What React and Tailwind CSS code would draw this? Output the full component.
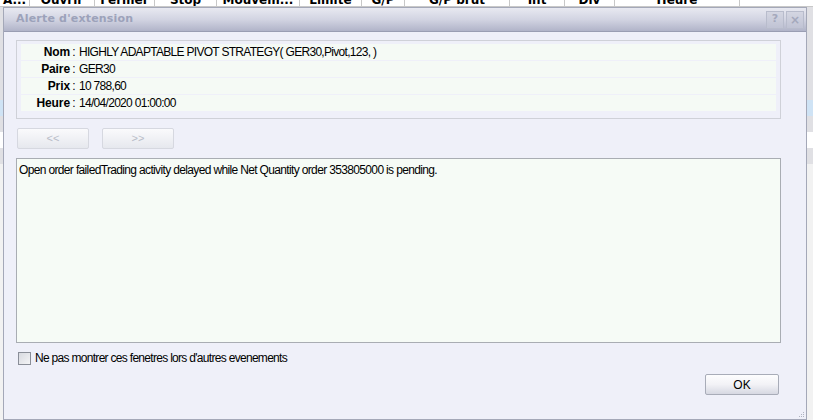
import React, { useState } from 'react';

const columns = [
  { label: 'A...', w: 'w-[30px]' },
  { label: 'Ouvrir', w: 'w-[65px]' },
  { label: 'Fermer', w: 'w-[60px]' },
  { label: 'Stop', w: 'w-[62px]' },
  { label: 'Mouvem...', w: 'w-[83px]' },
  { label: 'Limite', w: 'w-[62px]' },
  { label: 'G/P', w: 'w-[43px]' },
  { label: 'G/P brut', w: 'w-[105px]' },
  { label: 'Int', w: 'w-[55px]' },
  { label: 'Div', w: 'w-[50px]' },
  { label: 'Heure', w: 'w-[125px]' },
];

const details = [
  { label: 'Nom', value: 'HIGHLY ADAPTABLE PIVOT STRATEGY( GER30,Pivot,123, )' },
  { label: 'Paire', value: 'GER30' },
  { label: 'Prix', value: '10 788,60' },
  { label: 'Heure', value: '14/04/2020 01:00:00' },
];

const NavButton = ({ children }) => (
  <button
    disabled
    className="w-[72px] h-[21px] rounded-[2px] border border-[#d6d8e0] bg-gradient-to-b from-[#fafafc] to-[#e6e8ee] text-[11px] text-[#b8bcc8]"
  >
    {children}
  </button>
);

export default function App() {
  const [hideNext, setHideNext] = useState(false);

  return (
    <div className="relative w-[813px] h-[420px] overflow-hidden bg-[#f2f2f2] font-['Liberation_Sans',Arial,sans-serif]">
      {/* grid behind the dialog */}
      <div className="flex h-[7px] bg-white border-b border-[#c8c8c8] overflow-hidden">
        {columns.map((c) => (
          <div
            key={c.label}
            className={`${c.w} shrink-0 border-r border-[#c8c8c8] text-center text-[12px] font-bold leading-[12px] -mt-[6px] font-['DejaVu_Sans',sans-serif]`}
          >
            {c.label}
          </div>
        ))}
      </div>
      <div className="flex flex-col">
        <div className="h-[93px] bg-[#e0e0e4]" />
        <div className="h-[16px] bg-[#cfe3f5]" />
        <div className="h-[16px] bg-[#e0e0e4]" />
        <div className="h-[16px] bg-white" />
        <div className="h-[16px] bg-[#e0e0e4]" />
      </div>

      {/* dialog window */}
      <div className="absolute left-[3px] top-[7px] w-[804px] h-[413px] border border-[#a4a8b8] bg-[#eff0f9] flex flex-col">
        <div className="h-[24px] shrink-0 flex items-center justify-between pl-[12px] pr-[2px] bg-gradient-to-b from-[#e8e9f1] via-[#d2d4e2] to-[#b1b4c9] border-b border-[#9a9eb3]">
          <span className="text-[11px] font-bold text-[#9ca2ba] font-['DejaVu_Sans',sans-serif] tracking-[0.2px]">
            Alerte d'extension
          </span>
          <div className="flex gap-[2px]">
            <div className="w-[18px] h-[18px] border border-[#b8bccc] bg-gradient-to-b from-[#d4d6e2] to-[#c0c3d4] flex items-center justify-center text-[11px] font-bold text-[#a4a8bc] font-['DejaVu_Sans',sans-serif]">
              ?
            </div>
            <div className="w-[18px] h-[18px] border border-[#b8bccc] bg-gradient-to-b from-[#d4d6e2] to-[#c0c3d4] flex items-center justify-center text-[12px] font-bold text-[#a4a8bc] font-['DejaVu_Sans',sans-serif]">
              ×
            </div>
          </div>
        </div>

        <div className="flex flex-col px-[12px] pt-[8px] grow">
          {/* alert details */}
          <div className="w-[765px] h-[79px] border border-[#cfd1d8] bg-[#eff0f9] px-[4px] pt-[3px] flex flex-col gap-[1px]">
            {details.map((d) => (
              <div key={d.label} className="flex h-[16px] items-center bg-[#f5faf5] text-[12px] text-black tracking-[-0.7px]">
                <span className="w-[49px] text-right font-bold tracking-[-0.1px]">{d.label}</span>
                <span className="w-[7px] text-center">:</span>
                <span className="pl-[2px]">{d.value}</span>
              </div>
            ))}
          </div>

          <div className="flex gap-[13px] mt-[9px] ml-[1px]">
            <NavButton>&lt;&lt;</NavButton>
            <NavButton>&gt;&gt;</NavButton>
          </div>

          {/* message body */}
          <div className="mt-[9px] w-[765px] h-[185px] border border-[#a9adb3] bg-[#f6fbf6] px-[2px] pt-[2px] text-[12px] text-black tracking-[-0.65px]">
            Open order failedTrading activity delayed while Net Quantity order 353805000 is pending.
          </div>

          <label className="flex items-center gap-[4px] mt-[8px] ml-[2px] h-[14px]">
            <span
              onClick={() => setHideNext(!hideNext)}
              className="w-[13px] h-[13px] border border-[#8a8e98] bg-gradient-to-br from-[#d8dae0] to-[#f4f4f6] flex items-center justify-center text-[10px]"
            >
              {hideNext ? '✓' : ''}
            </span>
            <span className="text-[12px] text-black tracking-[-0.7px]">
              Ne pas montrer ces fenetres lors d'autres evenements
            </span>
          </label>

          <div className="flex justify-end mt-[9px] pr-[15px]">
            <button className="w-[74px] h-[21px] rounded-[2px] border border-[#a8acb8] bg-gradient-to-b from-[#fdfdfe] via-[#f2f2f6] to-[#d6d8e2] text-[12px] text-black">
              OK
            </button>
          </div>
        </div>

        {/* resize grip */}
        <div className="absolute right-[2px] bottom-[2px] grid grid-cols-3 gap-[1px]">
          <span className="w-[1px] h-[1px]" />
          <span className="w-[1px] h-[1px]" />
          <span className="w-[1px] h-[1px] bg-[#b0b4c0]" />
          <span className="w-[1px] h-[1px]" />
          <span className="w-[1px] h-[1px] bg-[#b0b4c0]" />
          <span className="w-[1px] h-[1px] bg-[#b0b4c0]" />
          <span className="w-[1px] h-[1px] bg-[#b0b4c0]" />
          <span className="w-[1px] h-[1px] bg-[#b0b4c0]" />
          <span className="w-[1px] h-[1px] bg-[#b0b4c0]" />
        </div>
      </div>
    </div>
  );
}
